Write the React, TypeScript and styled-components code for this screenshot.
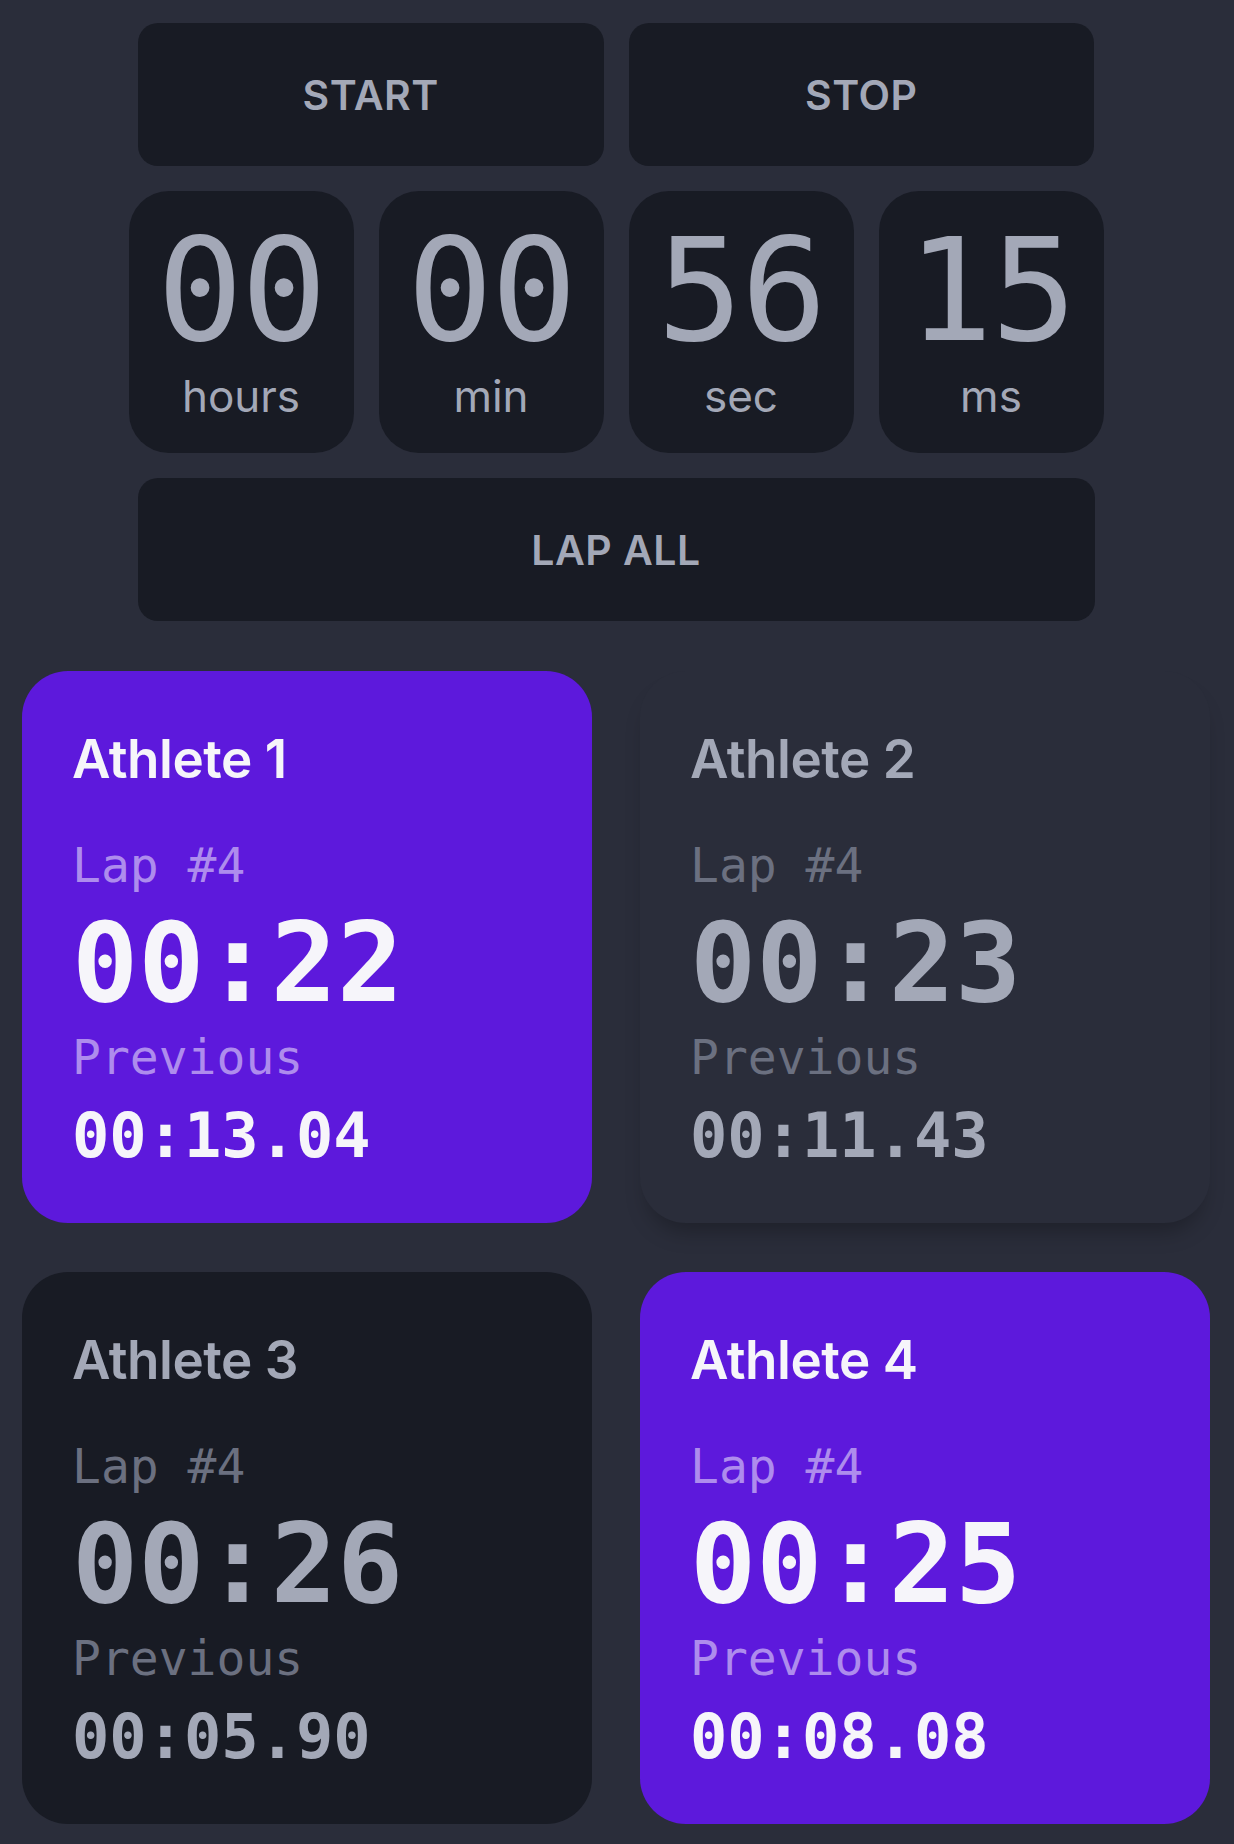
import React from "react";
import styled, { createGlobalStyle, css } from "styled-components";

const GlobalStyle = createGlobalStyle`
  html, body {
    margin: 0;
    padding: 0;
    background: #2a2d3a;
  }
  body {
    font-family: Inter, "Noto Sans", sans-serif;
    -webkit-font-smoothing: antialiased;
  }
  * { box-sizing: border-box; }
`;

const MONO = `"DejaVu Sans Mono", "Liberation Mono", monospace`;

const Page = styled.main`
  min-height: 1844px;
  padding: 23px 24px 21px 22px;
  display: flex;
  flex-direction: column;
  align-items: center;
`;

const Controls = styled.section`
  width: 956px;
  display: grid;
  grid-template-columns: 1fr 1fr;
  gap: 25px;
`;

const ActionButton = styled.button`
  height: 143px;
  border: none;
  border-radius: 20px;
  background: #181b24;
  color: #a3a8b7;
  font-family: Inter, sans-serif;
  font-weight: 600;
  font-size: 41px;
  letter-spacing: 0.5px;
  display: flex;
  align-items: center;
  justify-content: center;
  padding: 0;
  cursor: pointer;
`;

const WideButton = styled(ActionButton)`
  width: 957px;
  margin-top: 25px;
`;

const TimerRow = styled.section`
  margin-top: 25px;
  display: grid;
  grid-template-columns: repeat(4, 225px);
  gap: 25px;
`;

const TimeBox = styled.div`
  height: 262px;
  border-radius: 40px;
  background: #181b24;
  display: flex;
  flex-direction: column;
  align-items: center;
  padding-top: 28px;
`;

const TimeDigits = styled.div`
  font-family: ${MONO};
  font-size: 143px;
  line-height: 1;
  color: #a3a8b7;
  letter-spacing: -2px;
`;

const TimeUnit = styled.div`
  margin-top: 12px;
  font-family: Inter, sans-serif;
  font-size: 44px;
  line-height: 1;
  color: #a3a8b7;
`;

const CardGrid = styled.section`
  margin-top: 50px;
  width: 100%;
  display: grid;
  grid-template-columns: 1fr 1fr;
  column-gap: 48px;
  row-gap: 49px;
`;

type Variant = "active" | "raised" | "dark";

const Card = styled.article<{ $variant: Variant }>`
  border-radius: 46px;
  padding: 62px 40px 56px 50px;
  display: flex;
  flex-direction: column;
  ${({ $variant }) =>
    $variant === "active"
      ? css`
          background: #5d19dc;
          --title: #f6f5fa;
          --label: #ae8ced;
          --value: #f6f5fa;
        `
      : $variant === "raised"
      ? css`
          background: #2a2d3a;
          box-shadow: 0 16px 22px -8px rgba(0, 0, 0, 0.28);
          --title: #a3a8b7;
          --label: #6b7080;
          --value: #a3a8b7;
        `
      : css`
          background: #181b24;
          --title: #a3a8b7;
          --label: #6b7080;
          --value: #a3a8b7;
        `}
`;

const AthleteName = styled.h2`
  margin: 0;
  font-family: Inter, sans-serif;
  font-weight: 600;
  font-size: 53px;
  line-height: 1;
  letter-spacing: -0.5px;
  color: var(--title);
`;

const MonoLabel = styled.div<{ $gap: number }>`
  margin-top: ${({ $gap }) => $gap}px;
  font-family: ${MONO};
  font-size: 48px;
  line-height: 1;
  color: var(--label);
`;

const LapTime = styled.div`
  margin-top: 19px;
  font-family: ${MONO};
  font-weight: 700;
  font-size: 110px;
  line-height: 1;
  color: var(--value);
`;

const PrevTime = styled.div`
  margin-top: 24px;
  font-family: ${MONO};
  font-weight: 700;
  font-size: 62px;
  line-height: 1;
  color: var(--value);
`;

const timer = [
  { value: "00", unit: "hours" },
  { value: "00", unit: "min" },
  { value: "56", unit: "sec" },
  { value: "15", unit: "ms" },
];

const athletes: { name: string; lap: string; prev: string; variant: Variant }[] = [
  { name: "Athlete 1", lap: "00:22", prev: "00:13.04", variant: "active" },
  { name: "Athlete 2", lap: "00:23", prev: "00:11.43", variant: "raised" },
  { name: "Athlete 3", lap: "00:26", prev: "00:05.90", variant: "dark" },
  { name: "Athlete 4", lap: "00:25", prev: "00:08.08", variant: "active" },
];

export default function App() {
  return (
    <>
      <GlobalStyle />
      <Page>
        <Controls>
          <ActionButton>START</ActionButton>
          <ActionButton>STOP</ActionButton>
        </Controls>
        <TimerRow>
          {timer.map((t) => (
            <TimeBox key={t.unit}>
              <TimeDigits>{t.value}</TimeDigits>
              <TimeUnit>{t.unit}</TimeUnit>
            </TimeBox>
          ))}
        </TimerRow>
        <WideButton>LAP ALL</WideButton>
        <CardGrid>
          {athletes.map((a) => (
            <Card key={a.name} $variant={a.variant}>
              <AthleteName>{a.name}</AthleteName>
              <MonoLabel $gap={55}>Lap #4</MonoLabel>
              <LapTime>{a.lap}</LapTime>
              <MonoLabel $gap={15}>Previous</MonoLabel>
              <PrevTime>{a.prev}</PrevTime>
            </Card>
          ))}
        </CardGrid>
      </Page>
    </>
  );
}
